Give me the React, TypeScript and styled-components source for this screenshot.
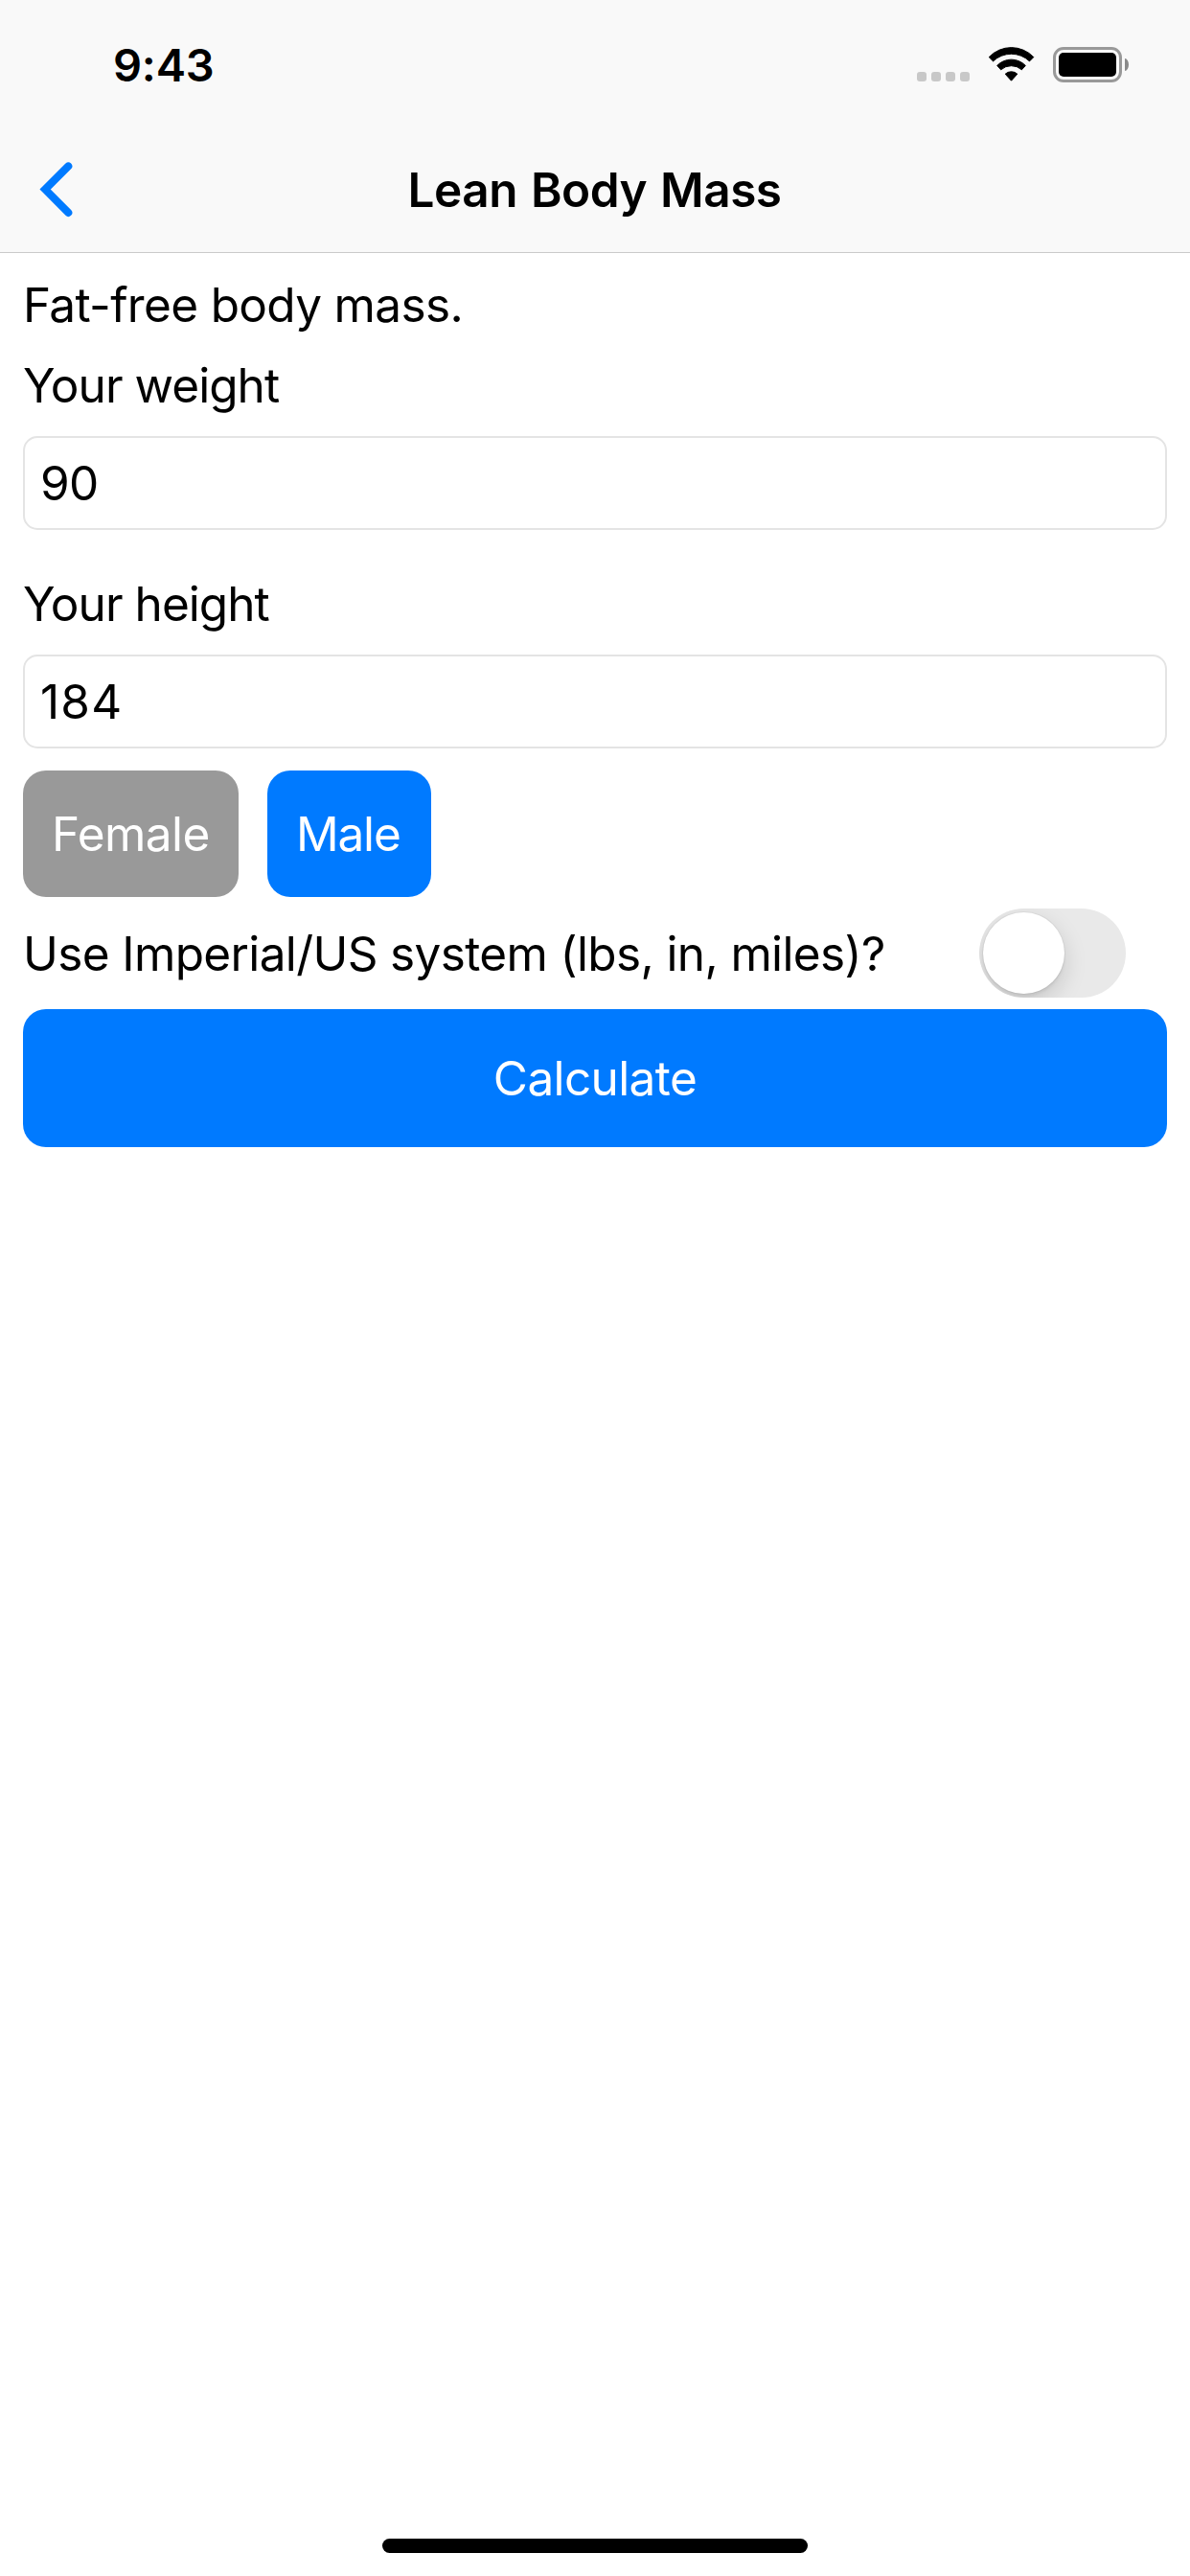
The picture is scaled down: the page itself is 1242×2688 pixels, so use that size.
import React, { useState } from "react";
import styled, { createGlobalStyle } from "styled-components";

const GlobalStyle = createGlobalStyle`
  * { box-sizing: border-box; }
  body { margin: 0; background: #fff; }
`;

const Screen = styled.div`
  width: 1242px;
  height: 2688px;
  display: flex;
  flex-direction: column;
  background: #fff;
  color: #000;
  font-family: Inter, "Liberation Sans", sans-serif;
  font-size: 49.5px;
  line-height: 60px;
  overflow: hidden;
`;

const Header = styled.header`
  height: 264px;
  flex: none;
  background: #f9f9f9;
  border-bottom: 1px solid #cacaca;
`;

const StatusBar = styled.div`
  height: 132px;
  display: flex;
  justify-content: space-between;
  align-items: flex-start;
  padding: 39px 64px 0 118px;
`;

const Time = styled.div`
  font-size: 47px;
  line-height: 57px;
  font-weight: 600;
  letter-spacing: -0.2px;
`;

const StatusIcons = styled.div`
  display: flex;
  align-items: flex-end;
  height: 47px;
`;

const SignalDots = styled.div`
  display: flex;
  gap: 5px;
  margin: 0 19px 1px 0;
`;

const SignalDot = styled.span`
  width: 10px;
  height: 10px;
  border-radius: 3px;
  background: #c8c8c8;
`;

const WifiIcon = styled.svg`
  width: 49px;
  height: 37px;
  margin-right: 19px;
`;

const Battery = styled.div`
  width: 72px;
  height: 37px;
  padding: 3px;
  border: 3px solid #999;
  border-radius: 11px;
`;

const BatteryLevel = styled.div`
  height: 25px;
  border-radius: 5px;
  background: #000;
`;

const BatteryTip = styled.span`
  width: 4px;
  height: 13px;
  margin: 0 0 12px 3px;
  border-radius: 0 4px 4px 0 / 0 6.5px 6.5px 0;
  background: #8a8a8a;
`;

const NavBar = styled.nav`
  height: 131px;
  display: grid;
  grid-template-columns: 120px 1fr 120px;
  align-items: center;
`;

const BackButton = styled.button`
  display: flex;
  margin: 0;
  padding: 0 0 0 38px;
  border: 0;
  background: none;
`;

const Title = styled.h1`
  margin: 0;
  padding-right: 1px;
  text-align: center;
  font-size: 49.5px;
  line-height: 60px;
  font-weight: 570;
  letter-spacing: -0.5px;
  word-spacing: 2px;
`;

const Content = styled.main`
  flex: 1;
  padding: 24px 24px 0;
`;

const Description = styled.p`
  margin: 0 0 24px;
  letter-spacing: -0.66px;
`;

const Field = styled.div<{ $gap: number }>`
  display: flex;
  flex-direction: column;
  gap: 23px;
  margin-bottom: ${({ $gap }) => $gap}px;
`;

const FieldLabel = styled.div`
  letter-spacing: -0.95px;
`;

const FieldValue = styled.div<{ $tracking: number }>`
  height: 98px;
  padding: 17px 16px;
  border: 2px solid #e4e4e4;
  border-radius: 15px;
  letter-spacing: ${({ $tracking }) => $tracking}px;
`;

const Choices = styled.div`
  display: flex;
  gap: 30px;
`;

const Choice = styled.button<{ $selected: boolean; $width: number; $tracking: number }>`
  width: ${({ $width }) => $width}px;
  height: 132px;
  margin: 0;
  padding: 0 0 0 30px;
  border: 0;
  border-radius: 24px;
  background: ${({ $selected }) => ($selected ? "#007aff" : "#999")};
  color: #fff;
  font: inherit;
  text-align: left;
  letter-spacing: ${({ $tracking }) => $tracking}px;
`;

const UnitRow = styled.div`
  height: 117px;
  display: flex;
  align-items: center;
  justify-content: space-between;
  padding-right: 43px;
`;

const UnitLabel = styled.span`
  padding-top: 1px;
  letter-spacing: -0.628px;
`;

const Switch = styled.button`
  width: 153px;
  height: 93px;
  display: flex;
  align-items: center;
  margin: 0;
  padding: 0 4px;
  border: 0;
  border-radius: 46.5px;
  background: #e9e9e9;
  overflow: hidden;
`;

const Knob = styled.span<{ $on: boolean }>`
  width: 85px;
  height: 85px;
  margin-left: ${({ $on }) => ($on ? 60 : 0)}px;
  border-radius: 50%;
  background: #fff;
  box-shadow: 0 9px 24px rgba(0, 0, 0, 0.15), 0 3px 3px rgba(0, 0, 0, 0.06),
    0 0 0 1px rgba(0, 0, 0, 0.04);
`;

const CalculateButton = styled.button`
  display: block;
  width: 100%;
  height: 144px;
  margin: 0;
  padding: 0;
  border: 0;
  border-radius: 24px;
  background: #007aff;
  color: #fff;
  font: inherit;
  letter-spacing: -0.62px;
`;

const HomeIndicator = styled.div`
  width: 444px;
  height: 15px;
  flex: none;
  margin: 0 auto 24px;
  border-radius: 8px;
  background: #000;
`;

export default function App() {
  const [sex, setSex] = useState("male");
  const [imperial, setImperial] = useState(false);

  return (
    <Screen>
      <GlobalStyle />
      <Header>
        <StatusBar>
          <Time>9:43</Time>
          <StatusIcons>
            <SignalDots>
              <SignalDot />
              <SignalDot />
              <SignalDot />
              <SignalDot />
            </SignalDots>
            <WifiIcon viewBox="0 0 49 37" stroke="#000" strokeWidth="1" strokeLinejoin="round">
              <path d="M1.2 10.6A32.2 32.2 0 0 1 47.8 10.6L43.5 14.9A27.5 27.5 0 0 0 5.5 14.9Z" />
              <path d="M9.7 19.4A20.6 20.6 0 0 1 39.3 19.4L35.4 23.8A16.5 16.5 0 0 0 13.6 23.8Z" />
              <path d="M18.2 28.2A9.4 9.4 0 0 1 30.8 28.2L24.5 35.2Z" />
            </WifiIcon>
            <Battery>
              <BatteryLevel />
            </Battery>
            <BatteryTip />
          </StatusIcons>
        </StatusBar>
        <NavBar>
          <BackButton aria-label="Back">
            <svg width="40" height="60" viewBox="0 0 40 60" fill="none">
              <path
                d="M33.3 5.4L9.1 29.6L33.3 53.9"
                stroke="#007aff"
                strokeWidth="8"
                strokeLinecap="round"
              />
            </svg>
          </BackButton>
          <Title>Lean Body Mass</Title>
        </NavBar>
      </Header>
      <Content>
        <Description>Fat-free body mass.</Description>
        <Field $gap={47}>
          <FieldLabel>Your weight</FieldLabel>
          <FieldValue $tracking={-0.7}>90</FieldValue>
        </Field>
        <Field $gap={23}>
          <FieldLabel>Your height</FieldLabel>
          <FieldValue $tracking={1.2}>184</FieldValue>
        </Field>
        <Choices>
          <Choice
            $selected={sex === "female"}
            $width={225}
            $tracking={-0.55}
            onClick={() => setSex("female")}
          >
            Female
          </Choice>
          <Choice
            $selected={sex === "male"}
            $width={171}
            $tracking={-1.2}
            onClick={() => setSex("male")}
          >
            Male
          </Choice>
        </Choices>
        <UnitRow>
          <UnitLabel>Use Imperial/US system (lbs, in, miles)?</UnitLabel>
          <Switch role="switch" aria-checked={imperial} onClick={() => setImperial(!imperial)}>
            <Knob $on={imperial} />
          </Switch>
        </UnitRow>
        <CalculateButton>Calculate</CalculateButton>
      </Content>
      <HomeIndicator />
    </Screen>
  );
}
